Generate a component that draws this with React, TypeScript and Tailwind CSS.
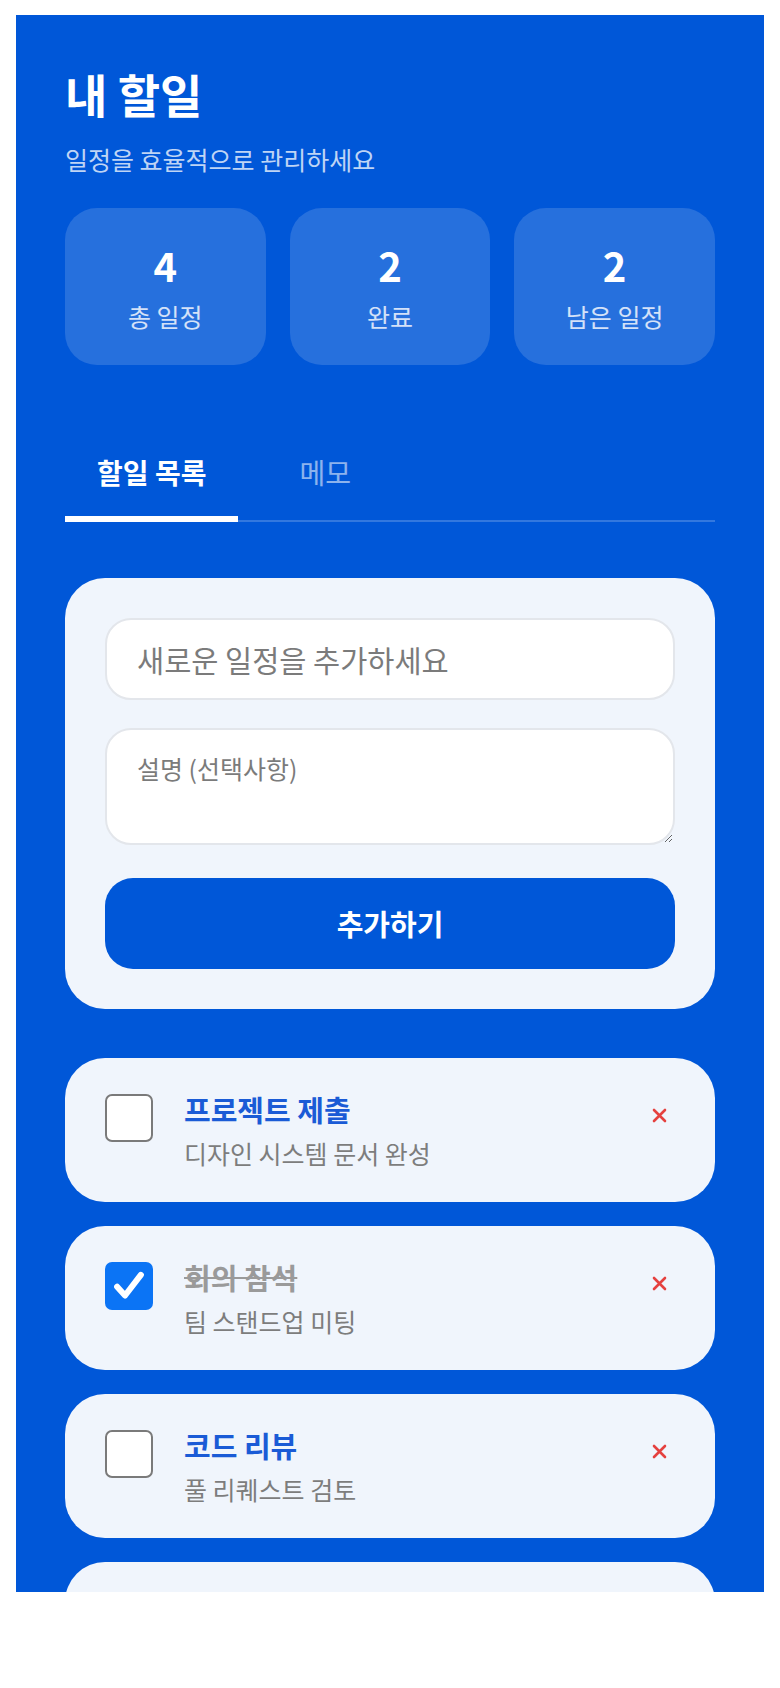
import { useState } from 'react'

type Todo = {
  id: number
  title: string
  desc: string
  done: boolean
}

const initialTodos: Todo[] = [
  { id: 1, title: '프로젝트 제출', desc: '디자인 시스템 문서 완성', done: false },
  { id: 2, title: '회의 참석', desc: '팀 스탠드업 미팅', done: true },
  { id: 3, title: '코드 리뷰', desc: '풀 리퀘스트 검토', done: false },
  { id: 4, title: '운동하기', desc: '저녁 30분 러닝', done: true },
]

export default function App() {
  const [todos, setTodos] = useState(initialTodos)
  const [tab, setTab] = useState<'todo' | 'memo'>('todo')

  const total = todos.length
  const done = todos.filter((t) => t.done).length

  const toggle = (id: number) =>
    setTodos((list) => list.map((t) => (t.id === id ? { ...t, done: !t.done } : t)))
  const remove = (id: number) => setTodos((list) => list.filter((t) => t.id !== id))

  return (
    <div
      className="min-h-[1688px] bg-white px-[16px] pt-[15px]"
      style={{ fontFamily: '"Noto Sans CJK KR", "Noto Sans", sans-serif' }}
    >
      <div className="h-[1577px] overflow-hidden bg-[#0057d8] px-[49px] pt-[48px]">
        {/* Header */}
        <h1 className="text-[46px] font-bold leading-[60px] text-white">내 할일</h1>
        <p className="mt-[20px] text-[25px] leading-[32px] text-white/75">일정을 효율적으로 관리하세요</p>

        {/* Stats */}
        <div className="mt-[33px] grid grid-cols-3 gap-[24px]">
          <StatCard value={total} label="총 일정" />
          <StatCard value={done} label="완료" />
          <StatCard value={total - done} label="남은 일정" />
        </div>

        {/* Tabs */}
        <div className="mt-[66px] flex border-b-2 border-white/20">
          <button
            onClick={() => setTab('todo')}
            className={`-mb-[2px] px-[32px] pt-[20px] pb-[23px] text-[28px] font-bold leading-[42px] border-b-[6px] ${
              tab === 'todo' ? 'border-white text-white' : 'border-transparent text-white/55'
            }`}
          >
            할일 목록
          </button>
          <button
            onClick={() => setTab('memo')}
            className={`-mb-[2px] ml-[29px] px-[32px] pt-[20px] pb-[23px] text-[28px] leading-[42px] border-b-[6px] ${
              tab === 'memo' ? 'border-white font-bold text-white' : 'border-transparent text-white/55'
            }`}
          >
            메모
          </button>
        </div>

        {/* Add form */}
        <div className="mt-[56px] rounded-[40px] bg-[#f0f5fc] p-[40px]">
          <input
            type="text"
            placeholder="새로운 일정을 추가하세요"
            className="block h-[82px] w-full rounded-[26px] border-2 border-[#e3e6eb] bg-white px-[30px] text-[29.5px] text-gray-800 outline-none placeholder:text-[#7b7b7b]"
          />
          <textarea
            placeholder="설명 (선택사항)"
            className="mt-[28px] block h-[117px] w-full rounded-[26px] border-2 border-[#e3e6eb] bg-white px-[30px] py-[20px] text-[25px] leading-[36px] text-gray-800 outline-none placeholder:text-[#7b7b7b]"
          />
          <button className="mt-[33px] block h-[91px] w-full rounded-[28px] bg-[#0057d8] text-[29px] font-bold text-white">
            추가하기
          </button>
        </div>

        {/* Todo list */}
        <div className="mt-[49px] flex flex-col gap-[24px]">
          {todos.map((todo) => (
            <TodoItem key={todo.id} todo={todo} onToggle={() => toggle(todo.id)} onRemove={() => remove(todo.id)} />
          ))}
        </div>
      </div>
    </div>
  )
}

function StatCard({ value, label }: { value: number; label: string }) {
  return (
    <div className="flex flex-col items-center rounded-[32px] bg-white/15 pt-[33px] pb-[32px]">
      <span className="text-[40px] font-bold leading-[48px] text-white">{value}</span>
      <span className="mt-[10px] text-[25px] leading-[34px] text-white/80">{label}</span>
    </div>
  )
}

function TodoItem({ todo, onToggle, onRemove }: { todo: Todo; onToggle: () => void; onRemove: () => void }) {
  return (
    <div className="flex items-start rounded-[40px] bg-[#f0f5fc] px-[40px] pt-[36px] pb-[35px]">
      <button
        onClick={onToggle}
        className={`flex h-[48px] w-[48px] shrink-0 items-center justify-center rounded-[7px] ${
          todo.done ? 'bg-[#0b74f5]' : 'border-2 border-[#7a7a7a] bg-white'
        }`}
      >
        {todo.done && (
          <svg width="38" height="38" viewBox="0 0 24 24" fill="none">
            <path d="M4.5 12.5l5 5.5L19.5 5" stroke="white" strokeWidth="3.8" strokeLinecap="round" strokeLinejoin="round" />
          </svg>
        )}
      </button>
      <div className="-mt-[3px] ml-[31px] min-w-0 flex-1">
        <p
          className={`text-[29px] font-bold leading-[36px] ${
            todo.done ? 'text-[#9a9a9a] line-through' : 'text-[#1a5bd6]'
          }`}
        >
          {todo.title}
        </p>
        <p className="mt-[12px] text-[25px] leading-[28px] text-[#7d7d7d]">{todo.desc}</p>
      </div>
      <button onClick={onRemove} className="mt-[14px] pl-[16px] pr-[8px]">
        <svg width="15" height="15" viewBox="0 0 15 15">
          <path d="M2 2l11 11M13 2L2 13" stroke="#e5413f" strokeWidth="2.6" strokeLinecap="round" />
        </svg>
      </button>
    </div>
  )
}
